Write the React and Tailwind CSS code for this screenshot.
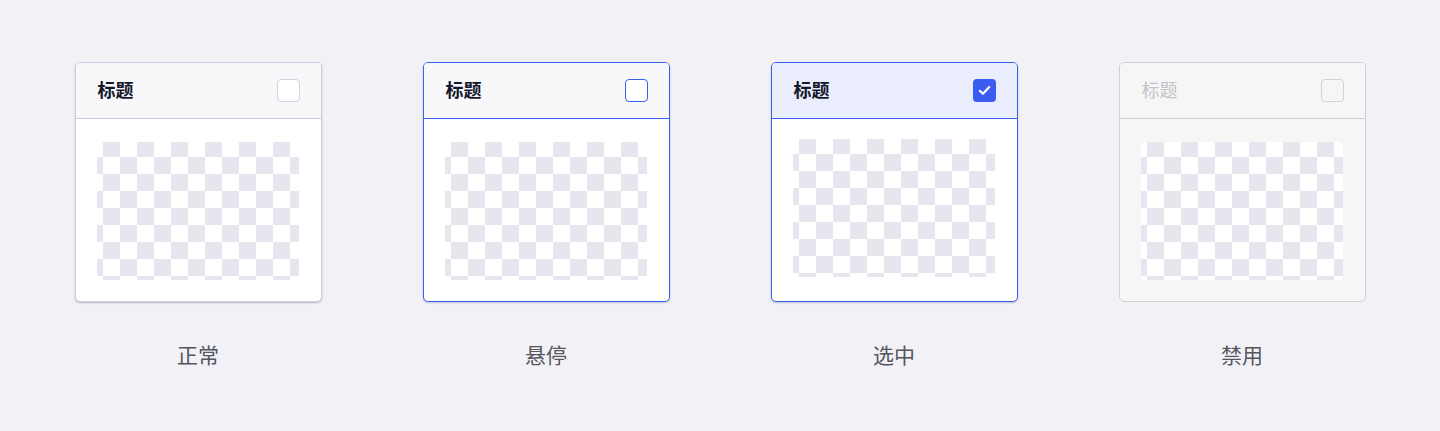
import React from "react";

const FONT = { fontFamily: '"Noto Sans CJK SC", "Noto Sans", sans-serif' };

function Checker({ extra = "" }) {
  return (
    <div
      className={`w-[202px] h-[138px] bg-white [background-image:conic-gradient(#ffffff_0_25%,#e6e6ee_0_50%,#ffffff_0_75%,#e6e6ee_0)] [background-size:34px_34px] [background-position:6px_-2px] ${extra}`}
    />
  );
}

function Card({ variant }) {
  const cardCls = {
    normal: "border-[#c9cce2] bg-white shadow-[0_1px_2px_rgba(80,84,120,0.35)]",
    hover: "border-[#3a5ef2] bg-white shadow-[0_1px_2px_rgba(80,84,120,0.3)]",
    selected: "border-[#3a5ef2] bg-white shadow-[0_1px_2px_rgba(80,84,120,0.3)]",
    disabled: "border-[#cfcfd5] bg-[#f6f6f7]",
  }[variant];
  const headCls = {
    normal: "bg-[#f8f8fb] border-[#c9cce2]",
    hover: "bg-[#f8f8fb] border-[#3a5ef2]",
    selected: "bg-[#e9edfc] border-[#3a5ef2]",
    disabled: "bg-[#f6f6f7] border-[#cfcfd5]",
  }[variant];
  const titleCls = variant === "disabled" ? "text-[#c3c3c9] font-normal" : "text-[#15182b] font-semibold";
  return (
    <div className={`w-[247px] h-[240px] rounded-[5px] border flex flex-col overflow-hidden ${cardCls}`}>
      <div className={`h-[56px] shrink-0 border-b flex items-center justify-between pl-[22px] pr-[21px] ${headCls}`}>
        <span className={`text-[18px] leading-none -mt-[3px] ${titleCls}`} style={FONT}>标题</span>
        {variant === "normal" && (
          <div className="w-[23px] h-[23px] -mt-[1px] rounded-[4px] border border-[#d3d4e0] bg-white" />
        )}
        {variant === "hover" && (
          <div className="w-[23px] h-[23px] -mt-[1px] rounded-[4px] border-[1.5px] border-[#3a5ef2] bg-white" />
        )}
        {variant === "selected" && (
          <div className="w-[23px] h-[23px] -mt-[1px] rounded-[4px] bg-[#3b5cf0] flex items-center justify-center">
            <svg width="13" height="11" viewBox="0 0 13 11" fill="none">
              <path d="M1.8 5.8 L5 8.8 L11.2 2" stroke="white" strokeWidth="2.2" strokeLinecap="round" strokeLinejoin="round" />
            </svg>
          </div>
        )}
        {variant === "disabled" && (
          <div className="w-[23px] h-[23px] -mt-[1px] rounded-[4px] border border-[#d2d2d7] bg-[#f6f6f7]" />
        )}
      </div>
      <div className={`flex-1 pl-[21px] ${variant === "selected" ? "pt-[20px]" : "pt-[23px]"}`}>
        <Checker extra={variant === "disabled" ? "rounded-[4px]" : ""} />
      </div>
    </div>
  );
}

const items = [
  { v: "normal", label: "正常" },
  { v: "hover", label: "悬停" },
  { v: "selected", label: "选中" },
  { v: "disabled", label: "禁用" },
];

export default function App() {
  return (
    <div className="w-[1440px] h-[431px] bg-[#f1f1f6] flex justify-center gap-[101px] pt-[62px]" style={FONT}>
      {items.map((it) => (
        <div key={it.v} className="flex flex-col items-center w-[247px]">
          <Card variant={it.v} />
          <div className="mt-[38px] text-[21px] leading-[28px] text-[#55565e]" style={FONT}>
            {it.label}
          </div>
        </div>
      ))}
    </div>
  );
}
